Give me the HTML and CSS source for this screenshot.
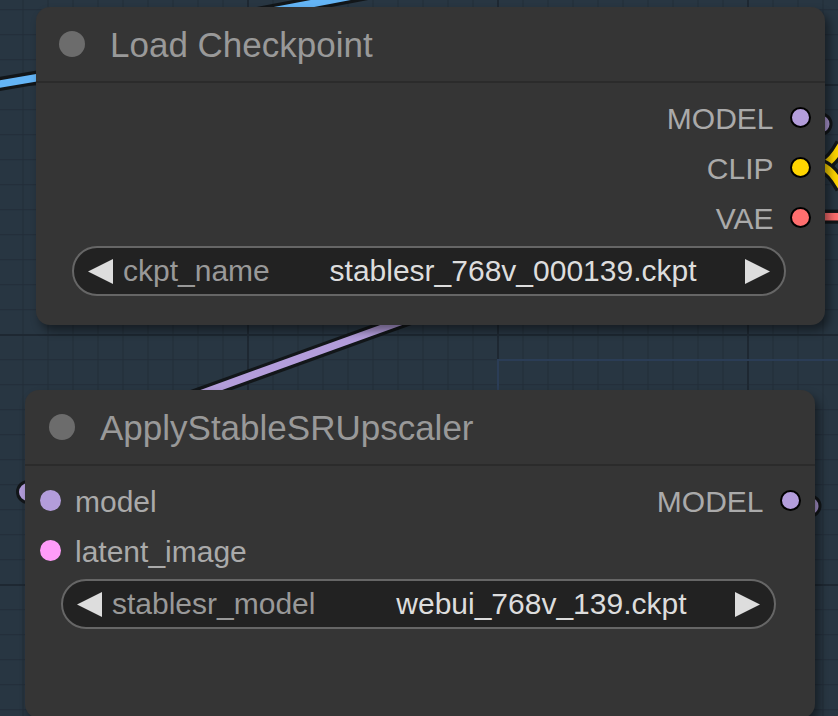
FILE: index.html
```html
<!DOCTYPE html>
<html>
<head>
<meta charset="utf-8">
<title>ComfyUI nodes</title>
<link rel="stylesheet" href="styles.css">
</head>
<body>
<div class="canvas">
  <div class="group-edge"></div>

  <svg class="wires" width="838" height="716" viewBox="0 0 838 716">
    <!-- blue wire, top-left -->
    <path class="wire-bg" d="M -20 87.4 L 60 73.7"/>
    <path class="wire wire-blue" d="M -20 87.4 L 60 73.7"/>
    <!-- blue wire, top -->
    <path class="wire-bg" d="M 200 24.9 L 420 -17"/>
    <path class="wire wire-blue" d="M 200 24.9 L 420 -17"/>
    <!-- purple wire between nodes -->
    <path class="wire-bg" d="M 190 397.7 L 430 311"/>
    <path class="wire wire-model" d="M 190 397.7 L 430 311"/>
    <!-- yellow wires right -->
    <path class="wire-bg" d="M 822 166 Q 832 162 842 144"/>
    <path class="wire wire-clip" d="M 822 166 Q 832 162 842 144"/>
    <path class="wire-bg" d="M 822 166 Q 832 170 842 188"/>
    <path class="wire wire-clip" d="M 822 166 Q 832 170 842 188"/>
    <!-- red wire right -->
    <path class="wire-bg" d="M 815 216.7 L 842 216.7"/>
    <path class="wire wire-vae" d="M 815 216.7 L 842 216.7"/>
    <!-- link markers -->
    <circle class="link-end link-model" cx="821" cy="124" r="10"/>
    <circle class="link-end link-model" cx="810" cy="506" r="10"/>
    <circle class="link-end link-model" cx="28" cy="492" r="10.5"/>
  </svg>

  <div class="node node-ckpt">
    <div class="node-header">
      <span class="title-dot"></span>
      <span class="node-title">Load Checkpoint</span>
    </div>
    <div class="node-body">
      <div class="slot-row">
        <div class="slot-out"><span class="slot-label">MODEL</span><span class="dot dot-out c-model"></span></div>
      </div>
      <div class="slot-row">
        <div class="slot-out"><span class="slot-label">CLIP</span><span class="dot dot-out c-clip"></span></div>
      </div>
      <div class="slot-row">
        <div class="slot-out"><span class="slot-label">VAE</span><span class="dot dot-out c-vae"></span></div>
      </div>
      <div class="combo">
        <svg class="arrow" width="25" height="25" viewBox="0 0 25 25"><polygon points="25,0 0,12.5 25,25"/></svg>
        <span class="combo-label">ckpt_name</span>
        <span class="combo-value">stablesr_768v_000139.ckpt</span>
        <svg class="arrow arrow-right" width="25" height="25" viewBox="0 0 25 25"><polygon points="0,0 25,12.5 0,25"/></svg>
      </div>
    </div>
  </div>

  <div class="node node-sr">
    <div class="node-header">
      <span class="title-dot"></span>
      <span class="node-title">ApplyStableSRUpscaler</span>
    </div>
    <div class="node-body">
      <div class="slot-row">
        <div class="slot-in"><span class="dot c-model"></span><span class="slot-label">model</span></div>
        <div class="slot-out"><span class="slot-label">MODEL</span><span class="dot dot-out c-model"></span></div>
      </div>
      <div class="slot-row">
        <div class="slot-in"><span class="dot c-latent"></span><span class="slot-label">latent_image</span></div>
      </div>
      <div class="combo">
        <svg class="arrow" width="25" height="25" viewBox="0 0 25 25"><polygon points="25,0 0,12.5 25,25"/></svg>
        <span class="combo-label">stablesr_model</span>
        <span class="combo-value">webui_768v_139.ckpt</span>
        <svg class="arrow arrow-right" width="25" height="25" viewBox="0 0 25 25"><polygon points="0,0 25,12.5 0,25"/></svg>
      </div>
    </div>
  </div>
</div>
</body>
</html>
```

FILE: styles.css
```css
* { box-sizing: border-box; }

html, body {
  margin: 0;
  padding: 0;
  background: #283642;
}

body {
  font-family: "Liberation Sans", Arial, sans-serif;
}

.canvas {
  position: relative;
  width: 838px;
  height: 716px;
  overflow: hidden;
  background-color: #283642;
  background-image:
    linear-gradient(to right, #1e2832 2px, transparent 2px),
    linear-gradient(to bottom, #1e2832 2px, transparent 2px),
    linear-gradient(to right, #222d38 1.5px, transparent 1.5px),
    linear-gradient(to bottom, #222d38 1.5px, transparent 1.5px);
  background-size: 250px 250px, 250px 250px, 25px 25px, 25px 25px;
  background-position: 247px 0, 0 84px, 22.5px 0, 0 9.25px;
}

.group-edge {
  position: absolute;
  left: 497px;
  top: 359px;
  width: 400px;
  height: 200px;
  border-top: 2px solid #2b3d56;
  border-left: 2px solid #2b3d56;
}

.wires {
  position: absolute;
  left: 0;
  top: 0;
}

.wire-bg {
  fill: none;
  stroke: #121619;
  stroke-width: 14;
}

.wire {
  fill: none;
  stroke-width: 7.5;
}

.wire-blue { stroke: #64b5f6; }
.wire-model { stroke: #b39ddb; }
.wire-clip { stroke: #ffd500; }
.wire-vae { stroke: #ff6e6e; }

.link-end {
  stroke: #121619;
  stroke-width: 3;
}

.link-model { fill: #b39ddb; }

/* nodes */
.node {
  position: absolute;
  background: #353535;
  border-radius: 14px;
  box-shadow: 4px 6px 10px rgba(0, 0, 0, 0.45);
}

.node-ckpt {
  left: 36px;
  top: 7px;
  width: 789px;
  height: 318px;
}

.node-sr {
  left: 25px;
  top: 390px;
  width: 790px;
  height: 328px;
}

.node-header {
  height: 76px;
  border-bottom: 2px solid #2b2b2b;
  display: flex;
  align-items: center;
  gap: 25px;
  padding-left: 23px;
}

.node-sr .node-header {
  padding-left: 24px;
}

.title-dot {
  width: 26px;
  height: 26px;
  border-radius: 50%;
  background: #6c6c6c;
  flex: none;
}

.node-title {
  font-size: 35px;
  color: #999999;
  white-space: nowrap;
  padding-top: 2px;
}

.node-body {
  padding-top: 9px;
}

.slot-row {
  height: 50px;
  display: flex;
  align-items: center;
}

.slot-in {
  display: flex;
  align-items: center;
  gap: 14.5px;
  padding-left: 14.5px;
}

.slot-out {
  display: flex;
  align-items: center;
  gap: 16px;
  margin-left: auto;
  padding-right: 14.5px;
}

.slot-label {
  font-size: 30px;
  color: #aaaaaa;
  white-space: nowrap;
  padding-top: 3px;
}

.dot {
  width: 21px;
  height: 21px;
  border-radius: 50%;
  flex: none;
}

.dot-out {
  border: 2px solid #000000;
}

.c-model { background: #b39ddb; }
.c-clip { background: #ffd500; }
.c-vae { background: #ff6e6e; }
.c-latent { background: #ff9cf9; }

/* combo widget */
.combo {
  height: 50px;
  margin: 4px 39px 0 36px;
  border: 2px solid #666666;
  border-radius: 25px;
  background: #222222;
  display: flex;
  align-items: center;
  font-size: 30px;
  white-space: nowrap;
}

.arrow {
  flex: none;
  margin-left: 13.5px;
  fill: #dddddd;
}

.arrow-right {
  margin-left: 0;
  margin-right: 14.5px;
}

.combo-label {
  margin-left: 10.5px;
  color: #999999;
}

.combo-value {
  flex: 1;
  text-align: right;
  margin-right: 48px;
  color: #dddddd;
}
```
